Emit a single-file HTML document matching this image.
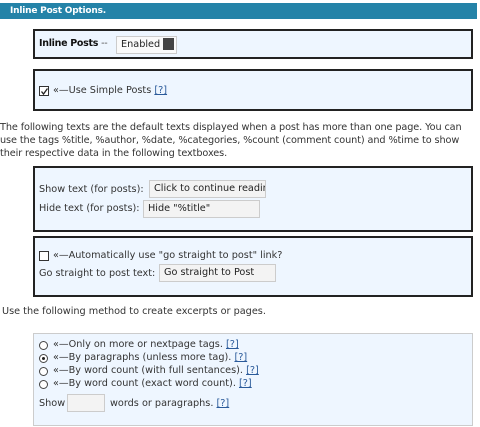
<!DOCTYPE html>
<html><head><style>
body{margin:0;width:480px;height:427px;background:#fff;font-family:"DejaVu Sans",Verdana,sans-serif;font-size:9.7px;color:#333;position:relative;overflow:hidden}
.a{position:absolute;white-space:nowrap}
.hdr{left:0;top:3px;width:477px;height:16px;background:#2483a8;color:#fff;font-weight:bold;font-size:9px;letter-spacing:-0.2px;line-height:16px;padding-left:10px;box-sizing:border-box}
.box{left:33px;width:440px;background:#eef6ff;border:2px solid #222;box-sizing:border-box}
.inp{background:#f3f3f3;border:1px solid #ccc;box-sizing:border-box;line-height:16px;padding-left:4px;white-space:nowrap;overflow:hidden;color:#222}
.cb{width:10px;height:10px;border:1px solid #333;background:#fff;box-sizing:border-box}
.q{color:#2a5a9a;text-decoration:underline}
.r{width:9px;height:9px;border:1px solid #444;border-radius:50%;box-sizing:border-box;background:#fff}
</style></head><body>
<div class="a hdr">Inline Post Options.</div>

<div class="a box" style="top:29px;height:30px"></div>
<div class="a" style="left:39px;top:38px;font-weight:bold;color:#111;font-size:9.5px;letter-spacing:-0.3px">Inline Posts <span style="font-weight:normal;color:#555">--</span></div>
<div class="a inp" style="left:116px;top:36px;width:61px;height:18px;background:#fafafa">Enabled</div>
<div class="a" style="left:163px;top:38px;width:11px;height:12px;background:#444"></div>

<div class="a box" style="top:69px;height:42px"></div>
<div class="a cb" style="left:39px;top:86px"></div>
<svg class="a" style="left:40px;top:87px" width="9" height="9"><path d="M1.5 4.5 L3.5 7 L7.5 1.5" stroke="#222" stroke-width="1.3" fill="none"/></svg>
<div class="a" style="left:53px;top:85px">«—Use Simple Posts <span class="q">[?]</span></div>

<div class="a" style="left:0;top:121px;width:478px;line-height:13px;white-space:normal;letter-spacing:-0.1px">The following texts are the default texts displayed when a post has more than one page. You can use the tags %title, %author, %date, %categories, %count (comment count) and %time to show their respective data in the following textboxes.</div>

<div class="a box" style="top:166px;height:66px"></div>
<div class="a" style="left:39px;top:184px">Show text (for posts):</div>
<div class="a inp" style="left:149px;top:180px;width:117px;height:18px">Click to continue readin</div>
<div class="a" style="left:39px;top:203px">Hide text (for posts):</div>
<div class="a inp" style="left:143px;top:200px;width:117px;height:18px">Hide "%title"</div>

<div class="a box" style="top:236px;height:61px"></div>
<div class="a cb" style="left:39px;top:251px"></div>
<div class="a" style="left:53px;top:250px">«—Automatically use "go straight to post" link?</div>
<div class="a" style="left:39px;top:268px">Go straight to post text:</div>
<div class="a inp" style="left:159px;top:264px;width:117px;height:18px">Go straight to Post</div>

<div class="a" style="left:2px;top:306px">Use the following method to create excerpts or pages.</div>

<div class="a box" style="top:333px;height:93px;border:1px solid #ccc"></div>
<div class="a r" style="left:39px;top:341px"></div>
<div class="a" style="left:53px;top:339px">«—Only on more or nextpage tags. <span class="q">[?]</span></div>
<div class="a r" style="left:39px;top:354px"></div>
<div class="a" style="left:42px;top:357px;width:3px;height:3px;background:#222;border-radius:50%"></div>
<div class="a" style="left:53px;top:352px">«—By paragraphs (unless more tag). <span class="q">[?]</span></div>
<div class="a r" style="left:39px;top:367px"></div>
<div class="a" style="left:53px;top:365px">«—By word count (with full sentances). <span class="q">[?]</span></div>
<div class="a r" style="left:39px;top:380px"></div>
<div class="a" style="left:53px;top:378px">«—By word count (exact word count). <span class="q">[?]</span></div>
<div class="a" style="left:39px;top:398px">Show</div>
<div class="a inp" style="left:67px;top:394px;width:38px;height:18px"></div>
<div class="a" style="left:110px;top:398px">words or paragraphs. <span class="q">[?]</span></div>
</body></html>
